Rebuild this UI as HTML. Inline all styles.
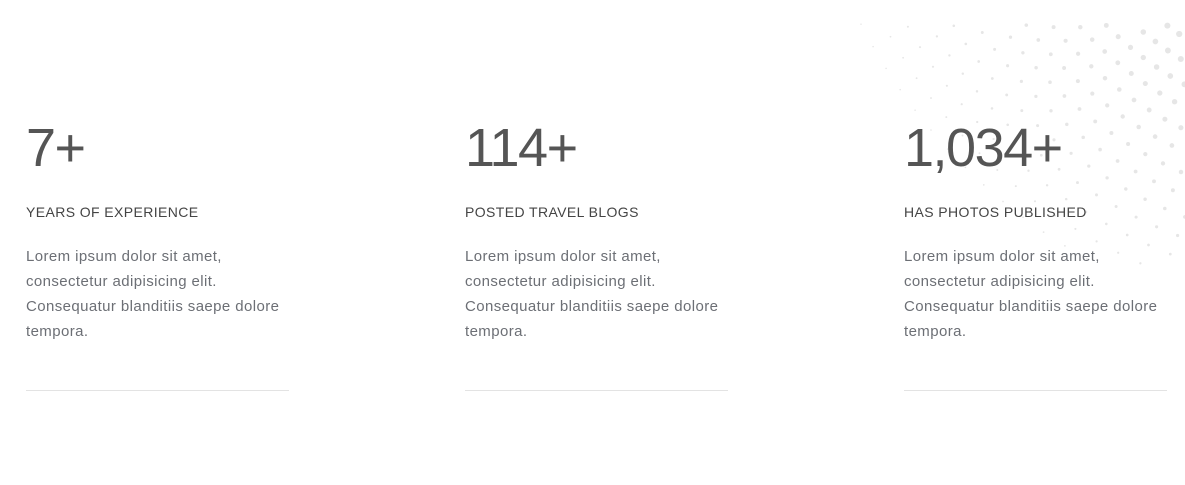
<!DOCTYPE html>
<html><head><meta charset="utf-8"><style>
body{margin:0;width:1185px;height:485px;background:#fff;position:relative;overflow:hidden;font-family:"Liberation Sans",sans-serif}
svg{position:absolute;left:0;top:0}
.col{position:absolute;top:118px;width:263px}
.num{font-size:54px;font-weight:300;color:#555;letter-spacing:-1.5px;line-height:60px;height:60px}
.h{margin-top:24px;font-size:14px;letter-spacing:0.4px;color:#444;line-height:20px}
.p{margin-top:22px;font-size:15px;letter-spacing:0.4px;line-height:25px;color:#6c6f75;white-space:nowrap}
.line{position:absolute;top:272px;left:0;width:263px;border-top:1px solid #e3e3e3}
</style></head><body>
<svg id="d" width="1185" height="485"></svg>
<div class="col" style="left:26px"><div class="num">7+</div><div class="h">YEARS OF EXPERIENCE</div><div class="p">Lorem ipsum dolor sit amet,<br>consectetur adipisicing elit.<br>Consequatur blanditiis saepe dolore<br>tempora.</div><div class="line"></div></div>
<div class="col" style="left:465px"><div class="num">114+</div><div class="h">POSTED TRAVEL BLOGS</div><div class="p">Lorem ipsum dolor sit amet,<br>consectetur adipisicing elit.<br>Consequatur blanditiis saepe dolore<br>tempora.</div><div class="line"></div></div>
<div class="col" style="left:904px"><div class="num">1,034+</div><div class="h">HAS PHOTOS PUBLISHED</div><div class="p">Lorem ipsum dolor sit amet,<br>consectetur adipisicing elit.<br>Consequatur blanditiis saepe dolore<br>tempora.</div><div class="line"></div></div>
<script>
var s=document.getElementById('d'),h='';
var cx=1360,cy=-230;
for(var r=240;r<=600;r+=20){
 for(var a=88;a<=200;a+=2.6){
  var t=a*Math.PI/180,x=cx+r*Math.cos(t),y=cy+r*Math.sin(t);
  if(y<22||x<820||x>1190||y>265)continue;
  var k=1-(r-240)/360; var m=1-(a-88)/112;
  var rad=0.5+5*k*Math.max(0.15,m);
  if(rad<0.7)continue;
  h+='<circle cx="'+x.toFixed(1)+'" cy="'+y.toFixed(1)+'" r="'+rad.toFixed(2)+'" fill="#e6e6e6"/>';
 }
}
s.innerHTML=h;
</script>
</body></html>
